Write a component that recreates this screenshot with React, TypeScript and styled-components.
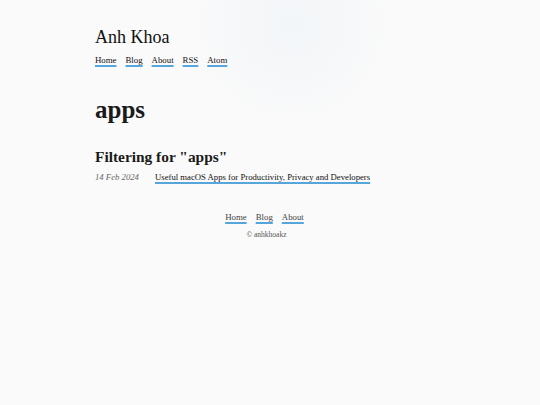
import React from 'react';
import styled, { createGlobalStyle } from 'styled-components';

const GlobalStyle = createGlobalStyle`
  html, body {
    margin: 0;
    padding: 0;
    background: #fafafa;
  }
  body {
    font-family: "Liberation Serif", "DejaVu Serif", serif;
    color: #1a1a1a;
  }
`;

const Page = styled.div`
  position: relative;
  min-height: 405px;
  background: radial-gradient(circle at 292px 25px, #f3f6f8 0, #f5f7f9 45px, rgba(250, 250, 250, 0) 100px), #fafafa;
`;

const Wrapper = styled.div`
  width: 350px;
  margin: 0 auto;
  padding-top: 26px;
`;

const SiteTitle = styled.div`
  font-size: 18px;
  line-height: 22px;
  color: #111;
`;

const Nav = styled.nav<{ $center?: boolean }>`
  display: flex;
  gap: 9px;
  justify-content: ${(p) => (p.$center ? 'center' : 'flex-start')};
  font-size: 8.8px;
`;

const Link = styled.a<{ $muted?: boolean }>`
  color: ${(p) => (p.$muted ? '#444' : '#111')};
  text-decoration: underline;
  text-decoration-color: #56a6dc;
  text-decoration-thickness: 1.8px;
  text-underline-offset: 2px;
  text-decoration-skip-ink: auto;
`;

const Header = styled.header`
  display: flex;
  flex-direction: column;
  gap: 7px;
`;

const Main = styled.main`
  padding-top: 30px;
`;

const H1 = styled.h1`
  margin: 0;
  font-size: 25px;
  line-height: 30px;
  font-weight: bold;
`;

const H2 = styled.h2`
  margin: 22px 0 0;
  font-size: 15.4px;
  line-height: 20px;
  font-weight: bold;
`;

const PostRow = styled.div`
  display: flex;
  align-items: baseline;
  gap: 17px;
  margin-top: 5px;
  font-size: 8.7px;
`;

const PostDate = styled.span`
  font-style: italic;
  color: #666;
  width: 43px;
  white-space: nowrap;
`;

const Footer = styled.footer`
  margin-top: 30px;
  padding-right: 11px;
  display: flex;
  flex-direction: column;
  align-items: center;
  gap: 8px;
`;

const Copyright = styled.div`
  font-size: 7.5px;
  color: #555;
  padding-left: 4px;
`;

export default function App() {
  return (
    <Page>
      <GlobalStyle />
      <Wrapper>
        <Header>
          <SiteTitle>Anh Khoa</SiteTitle>
          <Nav>
            <Link href="#">Home</Link>
            <Link href="#">Blog</Link>
            <Link href="#">About</Link>
            <Link href="#">RSS</Link>
            <Link href="#">Atom</Link>
          </Nav>
        </Header>
        <Main>
          <H1>apps</H1>
          <H2>Filtering for "apps"</H2>
          <PostRow>
            <PostDate>14 Feb 2024</PostDate>
            <Link href="#">Useful macOS Apps for Productivity, Privacy and Developers</Link>
          </PostRow>
        </Main>
      </Wrapper>
      <Footer>
        <Nav $center>
          <Link href="#" $muted>Home</Link>
          <Link href="#" $muted>Blog</Link>
          <Link href="#" $muted>About</Link>
        </Nav>
        <Copyright>© anhkhoakz</Copyright>
      </Footer>
    </Page>
  );
}
